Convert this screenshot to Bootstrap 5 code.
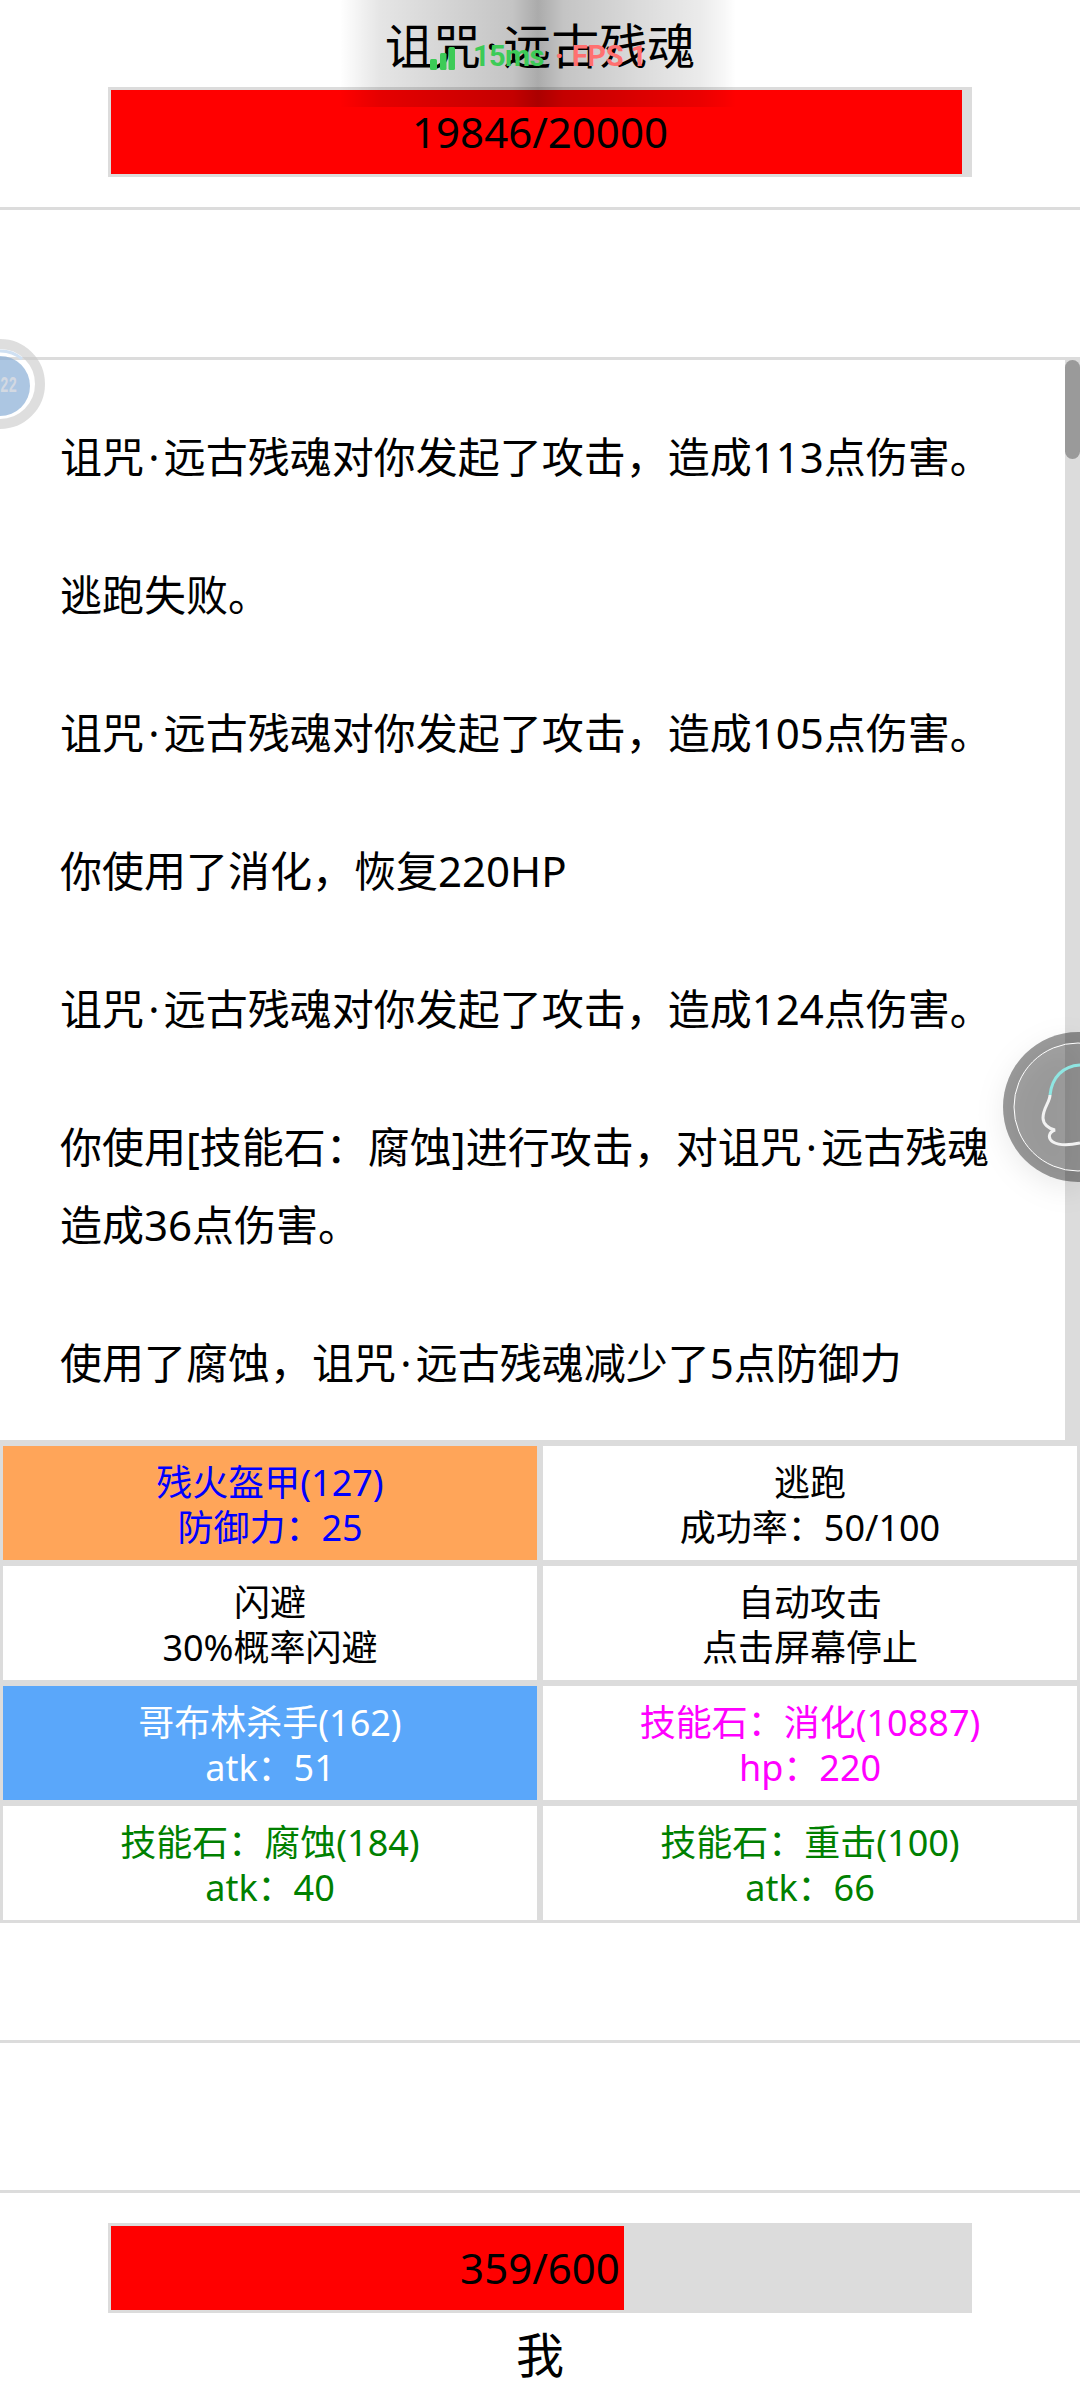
<!DOCTYPE html>
<html lang="zh">
<head>
    <meta charset="UTF-8">
    <meta name="viewport" content="width=device-width, initial-scale=1.0">
    <title>战斗</title>
    <link href="https://cdn.jsdelivr.net/npm/bootstrap@5.3.0/dist/css/bootstrap.min.css" rel="stylesheet">
    <style>
        body {
            font-family: "Noto Sans", "Noto Sans CJK SC", sans-serif;
            color: #000;
            background: #fff;
            height: 2400px;
            overflow: hidden;
            position: relative;
        }
        .boss-name { height: 87px; font-size: 48px; line-height: 92px; }
        .name-dot { margin: 0 .1em; }
        .hp-track {
            width: 864px;
            height: 90px;
            margin: 0 auto;
            border: 3px solid #dcdcdc;
            background: #dcdcdc;
            position: relative;
        }
        .hp-fill { height: 100%; background: #f00; }
        .hp-text {
            position: absolute;
            inset: 0;
            font-size: 42px;
            line-height: 84px;
            text-align: center;
        }
        .split-line { height: 3px; background: #dcdcdc; }
        .gap-top { height: 30px; }
        .gap-buff { height: 147px; }
        .log-box { height: 1080px; overflow: hidden; position: relative; padding: 58px 60px 0; }
        .log-box p { font-size: 42px; line-height: 78px; margin: 0 0 60px; }
        .scroll-track { position: absolute; top: 0; right: 0; bottom: 0; width: 15px; background: #dcdcdc; }
        .scroll-thumb { height: 99px; background: #9a9a9a; border-radius: 8px; }
        .skill-cell {
            height: 120px;
            padding-top: 3px;
            border: 3px solid #dcdcdc;
            font-size: 36px;
            line-height: 45px;
            text-align: center;
        }
        .skill-on-armor { background: #ffa559; color: #00f; }
        .skill-on-weapon { background: #5aa7fa; color: #fff; }
        .tone-heal { color: #f0f; }
        .tone-stone { color: #008000; }
        .me-name { font-size: 48px; line-height: 60px; padding-top: 12px; }
        .notch-shade {
            position: absolute;
            top: 0;
            left: 340px;
            width: 400px;
            height: 107px;
            background: linear-gradient(90deg, rgba(0,0,0,0) 0%, rgba(0,0,0,.05) 5%, rgba(0,0,0,.1) 10%, rgba(0,0,0,.16) 25%, rgba(0,0,0,.23) 43%, rgba(0,0,0,.33) 49.5%, rgba(0,0,0,.23) 56%, rgba(0,0,0,.14) 75%, rgba(0,0,0,.08) 90%, rgba(0,0,0,.03) 96%, rgba(0,0,0,0) 99%);
            pointer-events: none;
        }
        .net-stat {
            position: absolute;
            top: 41px;
            left: 430px;
            font-family: Roboto, sans-serif;
            font-size: 29px;
            line-height: 30px;
            font-weight: 700;
            white-space: nowrap;
        }
        .net-ok { color: #3ccb57; letter-spacing: -.6px; margin-left: 18px; }
        .net-sep { color: #ff7070; margin-left: 11px; margin-right: 8px; }
        .net-bad { color: #ff7070; letter-spacing: -.3px; }
        .float-ball { position: absolute; }
        .ball-left { left: 0; top: 339px; }
        .ball-right { right: 0; top: 1032px; filter: drop-shadow(0 8px 14px rgba(0,0,0,.18)); }
    </style>
</head>
<body>
    <div class="text-center boss-name">诅咒<span class="name-dot">·</span>远古残魂</div>
    <div class="hp-track">
        <div class="hp-fill" style="width: 99.23%"></div>
        <div class="hp-text">19846/20000</div>
    </div>
    <div class="gap-top"></div>
    <div class="split-line"></div>
    <div class="gap-buff"></div>
    <div class="split-line"></div>

    <div class="log-box">
        <p>诅咒<span class="name-dot">·</span>远古残魂对你发起了攻击，造成113点伤害。</p>
        <p>逃跑失败。</p>
        <p>诅咒<span class="name-dot">·</span>远古残魂对你发起了攻击，造成105点伤害。</p>
        <p>你使用了消化，恢复220HP</p>
        <p>诅咒<span class="name-dot">·</span>远古残魂对你发起了攻击，造成124点伤害。</p>
        <p>你使用[技能石：腐蚀]进行攻击，对诅咒<span class="name-dot">·</span>远古残魂造成36点伤害。</p>
        <p>使用了腐蚀，诅咒<span class="name-dot">·</span>远古残魂减少了5点防御力</p>
        <div class="scroll-track"><div class="scroll-thumb"></div></div>
    </div>

    <div class="split-line"></div>
    <div class="row g-0">
        <div class="col-6"><div class="skill-cell d-flex flex-column justify-content-center skill-on-armor"><div>残火盔甲(127)</div><div>防御力：25</div></div></div>
        <div class="col-6"><div class="skill-cell d-flex flex-column justify-content-center"><div>逃跑</div><div>成功率：50/100</div></div></div>
        <div class="col-6"><div class="skill-cell d-flex flex-column justify-content-center"><div>闪避</div><div>30%概率闪避</div></div></div>
        <div class="col-6"><div class="skill-cell d-flex flex-column justify-content-center"><div>自动攻击</div><div>点击屏幕停止</div></div></div>
        <div class="col-6"><div class="skill-cell d-flex flex-column justify-content-center skill-on-weapon"><div>哥布林杀手(162)</div><div>atk：51</div></div></div>
        <div class="col-6"><div class="skill-cell d-flex flex-column justify-content-center tone-heal"><div>技能石：消化(10887)</div><div>hp：220</div></div></div>
        <div class="col-6"><div class="skill-cell d-flex flex-column justify-content-center tone-stone"><div>技能石：腐蚀(184)</div><div>atk：40</div></div></div>
        <div class="col-6"><div class="skill-cell d-flex flex-column justify-content-center tone-stone"><div>技能石：重击(100)</div><div>atk：66</div></div></div>
    </div>

    <div style="height: 117px"></div>
    <div class="split-line"></div>
    <div style="height: 147px"></div>
    <div class="split-line"></div>
    <div style="height: 30px"></div>
    <div class="hp-track">
        <div class="hp-fill" style="width: 59.83%"></div>
        <div class="hp-text">359/600</div>
    </div>
    <div class="text-center me-name">我</div>

    <!-- оверлеи поверх страницы -->
    <div class="notch-shade"></div>
    <div class="net-stat d-flex align-items-end">
        <svg width="25" height="24" viewBox="0 0 25 24" class="flex-shrink-0"><rect x="0" y="12" width="7" height="11" rx="1.5" fill="#3ccb57"/><rect x="10" y="6" width="6.5" height="17" rx="1.5" fill="#3ccb57"/><rect x="18.5" y="0" width="6.5" height="23" rx="1.5" fill="#3ccb57"/></svg>
        <span class="net-ok">15ms</span><span class="net-sep">·</span><span class="net-bad">FPS 1</span>
    </div>

    <svg class="float-ball ball-left" width="46" height="90" viewBox="0 0 46 90">
        <circle cx="0" cy="45" r="40" fill="none" stroke="#c8c8c8" stroke-opacity=".6" stroke-width="10"/>
        <path d="M0 12A33 33 0 0 1 22 20" fill="none" stroke="#cfe0f2" stroke-width="3"/>
        <circle cx="0" cy="47" r="30" fill="#7fa8d2" fill-opacity=".65"/>
        <text x="0" y="53" font-size="22" font-family="Liberation Mono" font-weight="700" fill="#d3d9e2" textLength="17" lengthAdjust="spacingAndGlyphs">22</text>
    </svg>

    <svg class="float-ball ball-right" width="77" height="150" viewBox="0 0 77 150">
        <circle cx="75" cy="75" r="75" fill="#000" fill-opacity=".39"/>
        <circle cx="75" cy="75" r="64" fill="#fff" fill-opacity=".09"/>
        <circle cx="75" cy="75" r="64" fill="none" stroke="#fff" stroke-width="1"/>
        <path d="M47 63C49 45 60 34 77 33" fill="none" stroke="#8fe6e2" stroke-width="3"/>
        <path d="M47 63C47 70 40 76 40 86C40 92 46 97 52 98C46 100 44 106 50 110C57 114 68 113 77 111" fill="none" stroke="#f2f2f2" stroke-width="3"/>
    </svg>

    <script src="https://cdn.jsdelivr.net/npm/bootstrap@5.3.0/dist/js/bootstrap.bundle.min.js"></script>
</body>
</html>
